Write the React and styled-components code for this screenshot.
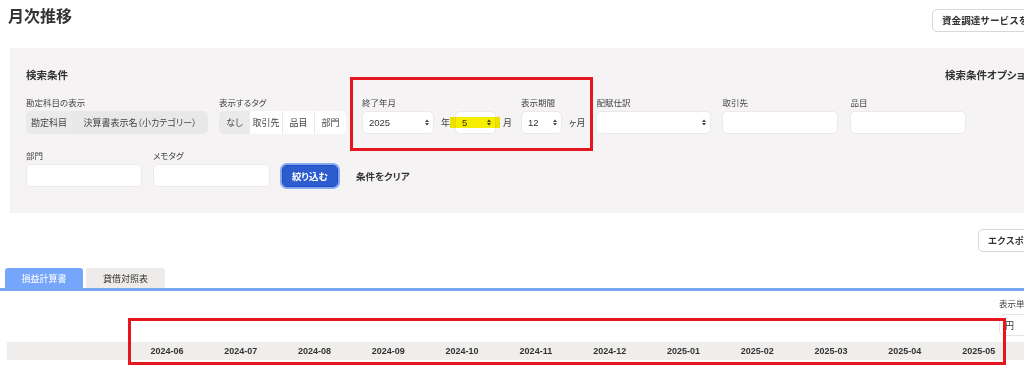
import React from "react";
import styled, { createGlobalStyle } from "styled-components";

const GlobalStyle = createGlobalStyle`
  html, body { margin: 0; padding: 0; background: #fff; overflow: hidden; }
  #root {
    width: 1024px; height: 366px; overflow: hidden; position: relative;
    font-family: "Noto Sans CJK JP", "Noto Sans", sans-serif;
    font-feature-settings: "palt";
    color: #333;
  }
  * { box-sizing: border-box; }
`;

const Header = styled.header`
  display: flex; justify-content: space-between; align-items: flex-start;
  height: 48px; padding-left: 8px;
`;
const Title = styled.h1`
  margin: 0; padding-top: 7px; font-size: 16px; line-height: 16px; font-weight: 700; color: #333;
`;
const ClipSlot = styled.div`
  width: ${(p) => p.$w}px; flex-shrink: 0; white-space: nowrap;
  padding-top: ${(p) => p.$top || 0}px;
`;
const GhostButton = styled.button`
  height: 23px; padding: 0 9px; border: 1px solid #d9d7d7; border-radius: 5px;
  background: #fff; color: #333; font-family: inherit; font-size: ${(p) => p.$size || 9}px; font-weight: 700;
  font-feature-settings: normal; white-space: nowrap; cursor: pointer;
`;

const Panel = styled.section`
  margin-left: 10px; height: 165px; background: #f5f3f4; padding: 20px 0 0 16px;
`;
const PanelHead = styled.div`
  display: flex; justify-content: space-between; align-items: center; height: 14px;
`;
const PanelTitle = styled.div`
  font-size: 10.5px; font-weight: 700; line-height: 14px; color: #333; white-space: nowrap;
`;
const Row = styled.div`
  display: flex; align-items: flex-end; margin-top: ${(p) => p.$mt}px;
`;
const Field = styled.div`
  display: flex; flex-direction: column; gap: 3px; margin-left: ${(p) => p.$ml || 0}px; flex-shrink: 0;
`;
const Label = styled.div`
  font-size: 8.5px; line-height: 11px; color: #444; white-space: nowrap;
`;
const Inline = styled.div`
  display: flex; align-items: center;
`;
const Unit = styled.span`
  font-size: 9px; color: #444; margin: 0 ${(p) => p.$mr || 0}px 0 ${(p) => p.$ml || 0}px; white-space: nowrap;
`;

const Segmented = styled.div`
  display: flex; height: 23px; width: ${(p) => p.$w}px; background: #e9e8e8; border-radius: 5px; overflow: hidden;
`;
const Segment = styled.div`
  display: flex; align-items: center; justify-content: center; flex-shrink: 0;
  width: ${(p) => p.$w}px; font-size: 9px; color: #444; white-space: nowrap;
  background: ${(p) => (p.$on ? "#ebeaea" : p.$white ? "#fff" : "transparent")};
  border-left: ${(p) => (p.$sep ? "1px solid #ebe9e9" : "none")};
`;

const Box = styled.div`
  position: relative; width: ${(p) => p.$w}px; height: 23px; background: #fff;
  border: 1px solid #ebe9ea; border-radius: 5px; display: flex; align-items: center;
  padding: 0 6px; font-family: "Liberation Sans", Arial, sans-serif; font-size: 9.5px; color: #333;
`;
const BoxText = styled.span`flex: 1;`;
const Arrows = styled.svg`flex-shrink: 0; margin-right: -2px;`;

const SelectArrows = () => (
  <Arrows width="4" height="7" viewBox="0 0 4 7">
    <path d="M0 3 L2 0.5 L4 3 Z M0 4 L2 6.5 L4 4 Z" fill="#444" />
  </Arrows>
);

const Select = ({ w, value }) => (
  <Box $w={w}>
    <BoxText>{value}</BoxText>
    <SelectArrows />
  </Box>
);

const PrimaryButton = styled.button`
  width: 56px; height: 22px; margin: 0 2px 0 12px; border-radius: 5px; border: 1px solid #1f4fbf;
  background: #2c5ccd; box-shadow: 0 0 0 2px #86a8f2; color: #fff; font-family: inherit;
  font-feature-settings: "palt"; font-size: 9.5px; font-weight: 700; cursor: pointer;
`;
const TextButton = styled.span`
  margin-left: 16px; font-size: 9.5px; font-weight: 700; color: #333; line-height: 22px; white-space: nowrap;
`;

const ExportRow = styled.div`
  display: flex; justify-content: flex-end; margin-top: 12px;
`;

const Tabs = styled.div`
  display: flex; gap: 3px; margin: 16px 0 0 5px; height: 20px;
`;
const Tab = styled.div`
  width: ${(p) => p.$w}px; height: 20px; border-radius: 3px 3px 0 0; display: flex; align-items: center; justify-content: center;
  font-size: 9px; background: ${(p) => (p.$active ? "#76a6fc" : "#eeeceb")}; color: ${(p) => (p.$active ? "#fff" : "#333")};
`;
const TabLine = styled.div`
  height: 3px; background: #78a7f6;
`;

const UnitArea = styled.div`
  display: flex; justify-content: flex-end; margin-top: 7px;
`;
const UnitBox = styled.div`
  display: flex; flex-direction: column; gap: 5px;
`;
const UnitSelect = styled.div`
  width: 60px; height: 22px; background: #fff; border: 1px solid #e6e4e4; border-radius: 5px;
  font-size: 9px; display: flex; align-items: center; padding-left: 5px; color: #333;
`;

const TableHead = styled.div`
  display: grid; grid-template-columns: 123px repeat(12, 73.8px);
  margin: 6px 0 0 7px; height: 18px; background: #efeeed;
`;
const HeadCell = styled.div`
  text-align: center; font-family: "Liberation Sans", Arial, sans-serif; font-weight: 700;
  font-size: 9px; line-height: 18px; color: #333;
`;

const RedBox = styled.div`
  position: absolute; left: ${(p) => p.$x}px; top: ${(p) => p.$y}px; width: ${(p) => p.$w}px; height: ${(p) => p.$h}px;
  border: 3px solid #e5161d; pointer-events: none;
`;
const Highlight = styled.div`
  position: absolute; left: 450px; top: 117px; width: 50px; height: 11px;
  background: #f6ee00; mix-blend-mode: multiply; pointer-events: none;
`;

const months = ["2024-06", "2024-07", "2024-08", "2024-09", "2024-10", "2024-11", "2024-12", "2025-01", "2025-02", "2025-03", "2025-04", "2025-05"];

export default function App() {
  return (
    <>
      <GlobalStyle />
      <Header>
        <Title>月次推移</Title>
        <ClipSlot $w={92} $top={5}>
          <GhostButton $size={9.6}>資金調達サービスを利用する</GhostButton>
        </ClipSlot>
      </Header>

      <Panel>
        <PanelHead>
          <PanelTitle>検索条件</PanelTitle>
          <ClipSlot $w={79}>
            <PanelTitle>検索条件オプションを表示</PanelTitle>
          </ClipSlot>
        </PanelHead>

        <Row $mt={15}>
          <Field>
            <Label>勘定科目の表示</Label>
            <Segmented $w={182}>
              <Segment $w={46} $on>勘定科目</Segment>
              <Segment $w={136}>決算書表示名（小カテゴリー）</Segment>
            </Segmented>
          </Field>
          <Field $ml={11}>
            <Label>表示するタグ</Label>
            <Segmented $w={127}>
              <Segment $w={31} $on>なし</Segment>
              <Segment $w={32} $white>取引先</Segment>
              <Segment $w={32} $white $sep>品目</Segment>
              <Segment $w={32} $white $sep>部門</Segment>
            </Segmented>
          </Field>
          <Field $ml={16}>
            <Label>終了年月</Label>
            <Inline>
              <Select w={72} value="2025" />
              <Unit $ml={7} $mr={5}>年</Unit>
              <Select w={41} value="5" />
              <Unit $ml={7}>月</Unit>
            </Inline>
          </Field>
          <Field $ml={9}>
            <Label>表示期間</Label>
            <Inline>
              <Select w={41} value="12" />
              <Unit $ml={7}>ヶ月</Unit>
            </Inline>
          </Field>
          <Field $ml={11}>
            <Label>配賦仕訳</Label>
            <Select w={115} value="" />
          </Field>
          <Field $ml={11}>
            <Label>取引先</Label>
            <Box $w={116} />
          </Field>
          <Field $ml={12}>
            <Label>品目</Label>
            <Box $w={116} />
          </Field>
        </Row>

        <Row $mt={16}>
          <Field>
            <Label>部門</Label>
            <Box $w={116} />
          </Field>
          <Field $ml={11}>
            <Label>メモタグ</Label>
            <Box $w={117} />
          </Field>
          <PrimaryButton>絞り込む</PrimaryButton>
          <TextButton>条件をクリア</TextButton>
        </Row>
      </Panel>

      <ExportRow>
        <ClipSlot $w={46}>
          <GhostButton>エクスポート</GhostButton>
        </ClipSlot>
      </ExportRow>

      <Tabs>
        <Tab $w={78} $active>損益計算書</Tab>
        <Tab $w={79}>貸借対照表</Tab>
      </Tabs>
      <TabLine />

      <UnitArea>
        <ClipSlot $w={25}>
          <UnitBox>
            <Label>表示単位</Label>
            <UnitSelect>円</UnitSelect>
          </UnitBox>
        </ClipSlot>
      </UnitArea>

      <TableHead>
        <HeadCell />
        {months.map((m) => (
          <HeadCell key={m}>{m}</HeadCell>
        ))}
      </TableHead>

      <Highlight />
      <RedBox $x={350} $y={77} $w={243} $h={74} />
      <RedBox $x={128} $y={318} $w={878} $h={47} />
    </>
  );
}
